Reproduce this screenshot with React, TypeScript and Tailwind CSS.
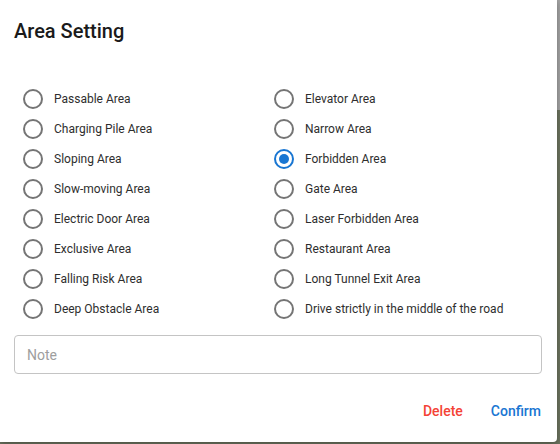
import { useState } from "react";

const leftOptions = [
  "Passable Area",
  "Charging Pile Area",
  "Sloping Area",
  "Slow-moving Area",
  "Electric Door Area",
  "Exclusive Area",
  "Falling Risk Area",
  "Deep Obstacle Area",
];

const rightOptions = [
  "Elevator Area",
  "Narrow Area",
  "Forbidden Area",
  "Gate Area",
  "Laser Forbidden Area",
  "Restaurant Area",
  "Long Tunnel Exit Area",
  "Drive strictly in the middle of the road",
];

function RadioItem({ label, checked, onSelect }: { label: string; checked: boolean; onSelect: () => void }) {
  return (
    <label className="flex items-center h-[30px] cursor-pointer" onClick={onSelect}>
      <span
        className={
          checked
            ? "w-[20px] h-[20px] rounded-full border-2 border-[#1976d2] flex items-center justify-center shrink-0"
            : "w-[20px] h-[20px] rounded-full border-2 border-[#757575] flex items-center justify-center shrink-0"
        }
      >
        {checked && <span className="w-[10px] h-[10px] rounded-full bg-[#1976d2]" />}
      </span>
      <span className="ml-[11px] text-[12px] text-[#2e2e2e] leading-none">{label}</span>
    </label>
  );
}

export default function App() {
  const [selected, setSelected] = useState("Forbidden Area");

  return (
    <div className="w-[560px] h-[444px] flex items-start bg-[linear-gradient(to_bottom,#a3a3a3_0,#a3a3a3_110px,#6c735f_110px)] font-['Roboto',sans-serif]">
      <div className="w-[557px] h-[442px] bg-white rounded-br-[4px] flex flex-col shadow-[0_2px_6px_rgba(0,0,0,0.3)]">
        <h2 className="pt-[15px] px-[14px] text-[20px] font-medium leading-[32px] text-[#1a1a1a]">Area Setting</h2>

        <div className="mt-[37px] pl-[23px] grid grid-cols-[251px_1fr]">
          <div className="flex flex-col">
            {leftOptions.map((o) => (
              <RadioItem key={o} label={o} checked={selected === o} onSelect={() => setSelected(o)} />
            ))}
          </div>
          <div className="flex flex-col">
            {rightOptions.map((o) => (
              <RadioItem key={o} label={o} checked={selected === o} onSelect={() => setSelected(o)} />
            ))}
          </div>
        </div>

        <div className="mt-[11px] mx-[14px]">
          <input
            placeholder="Note"
            className="w-[528px] h-[39px] border border-[#c4c4c4] rounded-[4px] px-[12px] text-[14px] text-[#212121] placeholder:text-[#9e9e9e] outline-none"
          />
        </div>

        <div className="mt-auto mb-[14px] flex justify-end items-center pr-[16px] gap-[28px] text-[14px] font-medium">
          <button className="text-[#f44336] px-[0px] py-[6px]">Delete</button>
          <button className="text-[#1976d2] px-[0px] py-[6px]">Confirm</button>
        </div>
      </div>
    </div>
  );
}
